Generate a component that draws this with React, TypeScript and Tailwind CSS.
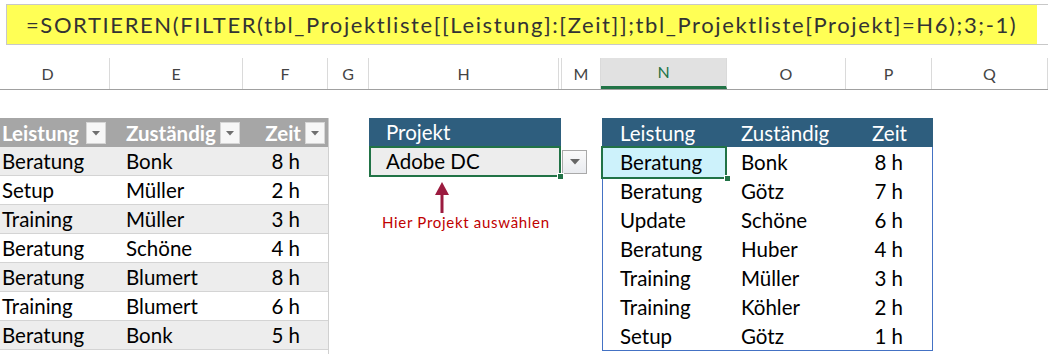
import React from 'react'

const leftRows = [
  ['Beratung', 'Bonk', '8 h'],
  ['Setup', 'Müller', '2 h'],
  ['Training', 'Müller', '3 h'],
  ['Beratung', 'Schöne', '4 h'],
  ['Beratung', 'Blumert', '8 h'],
  ['Training', 'Blumert', '6 h'],
  ['Beratung', 'Bonk', '5 h'],
]

const rightRows = [
  ['Beratung', 'Bonk', '8 h'],
  ['Beratung', 'Götz', '7 h'],
  ['Update', 'Schöne', '6 h'],
  ['Beratung', 'Huber', '4 h'],
  ['Training', 'Müller', '3 h'],
  ['Training', 'Köhler', '2 h'],
  ['Setup', 'Götz', '1 h'],
]

const columns = [
  { name: 'D', width: 'w-[124px] -ml-[14px]' },
  { name: 'E', width: 'w-[133px]' },
  { name: 'F', width: 'w-[85px]' },
  { name: 'G', width: 'w-[41px]' },
  { name: 'H', width: 'w-[190px]' },
  { name: '', width: 'w-[3px]' },
  { name: 'M', width: 'w-[39px]' },
  { name: 'N', width: 'w-[126px]', active: true },
  { name: 'O', width: 'w-[119px]' },
  { name: 'P', width: 'w-[86px]' },
  { name: 'Q', width: 'w-[116px]' },
]

function FilterButton() {
  return (
    <span className="flex items-center justify-center w-[20px] h-[22px] bg-[#f7f7f7] border border-[#d6d6d6]">
      <svg width="8" height="5" viewBox="0 0 8 5">
        <path d="M0 0 L8 0 L4 4.5 Z" fill="#6f6f6f" />
      </svg>
    </span>
  )
}

export default function App() {
  return (
    <div className="w-[1048px] h-[354px] overflow-hidden bg-white font-['Lato',sans-serif] text-black">
      {/* formula bar */}
      <div className="ml-[6px] mt-[4px] h-[41px] flex border-y border-l border-[#c8c8c8]">
        <div className="w-[1030px] h-full bg-[#ffff55] flex items-center pl-[19px] text-[22px] text-[#333] tracking-[1.6px] whitespace-nowrap overflow-hidden">
          =SORTIEREN(FILTER(tbl_Projektliste[[Leistung]:[Zeit]];tbl_Projektliste[Projekt]=H6);3;-1)
        </div>
      </div>

      {/* column headers */}
      <div className="mt-[13px] h-[32px] flex border-b border-[#a0a0a0] text-[16px] text-[#444]">
        {columns.map((c, i) => (
          <div
            key={i}
            className={
              'shrink-0 flex items-center justify-center border-r border-[#dadada] ' +
              c.width +
              (c.active ? ' bg-[#e1e1e1] border-b-[3px] border-b-[#217346] text-[#217346]' : '')
            }
          >
            {c.name}
          </div>
        ))}
      </div>

      {/* sheet body */}
      <div className="flex items-start pt-[28px] text-[20.5px]">
        {/* left table */}
        <div className="w-[329px] shrink-0 border-r border-[#d0d0d0] pb-[10px]">
          <div className="grid grid-cols-[110px_133px_85px] h-[29px] bg-[#a6a6a6] text-white font-bold">
            <div className="flex items-center justify-between pl-[2px] pr-[4px]">
              <span>Leistung</span>
              <FilterButton />
            </div>
            <div className="flex items-center justify-between pl-[16px] pr-[3px]">
              <span>Zuständig</span>
              <FilterButton />
            </div>
            <div className="flex items-center justify-end gap-[4px] pr-[3px]">
              <span>Zeit</span>
              <FilterButton />
            </div>
          </div>
          {leftRows.map((r, i) => (
            <div
              key={i}
              className={
                'grid grid-cols-[110px_133px_85px] h-[29px] border-b border-[#d4d4d4] items-center pt-[1px] ' +
                (i % 2 === 0 ? 'bg-[#ededed]' : 'bg-white')
              }
            >
              <div className="pl-[2px] leading-none">{r[0]}</div>
              <div className="pl-[16px] leading-none">{r[1]}</div>
              <div className="pr-[28px] text-right leading-none">{r[2]}</div>
            </div>
          ))}
        </div>

        {/* project selector */}
        <div className="ml-[40px] w-[218px] shrink-0">
          <div className="w-[192px] h-[29px] bg-[#2e5e7e] text-white flex items-center pl-[17px]">Projekt</div>
          <div className="flex items-start">
            <div className="relative -mt-[1px] w-[192px] h-[31px] bg-[#ededed] border-2 border-[#217346] flex items-center pl-[15px]">
              Adobe DC
              <span className="absolute -right-[5px] -bottom-[5px] w-[7px] h-[7px] bg-[#217346] border border-white" />
            </div>
            <div className="mt-[3px] ml-[1px] w-[25px] h-[24px] border border-[#a9a9a9] bg-gradient-to-b from-[#fafafa] to-[#e9ebef] flex items-center justify-center">
              <svg width="10" height="6" viewBox="0 0 10 6">
                <path d="M0 0 L10 0 L5 5.5 Z" fill="#666" />
              </svg>
            </div>
          </div>
          <div className="ml-[66px] mt-[5px]">
            <svg width="14" height="32" viewBox="0 0 14 32">
              <path d="M7 0 L14 13 L0 13 Z" fill="#9b1b3f" />
              <rect x="5.5" y="12" width="3" height="19" fill="#9b1b3f" />
            </svg>
          </div>
          <div className="ml-[13px] -mt-[1px] text-[15px] tracking-[0.7px] leading-[18px] text-[#c00000] whitespace-nowrap">
            Hier Projekt auswählen
          </div>
        </div>

        {/* result table */}
        <div className="ml-[15px] w-[331px] shrink-0">
          <div className="grid grid-cols-[125px_119px_87px] h-[29px] bg-[#2e5e7e] text-white items-center">
            <div className="pl-[18px]">Leistung</div>
            <div className="pl-[14px]">Zuständig</div>
            <div className="pl-[26px]">Zeit</div>
          </div>
          <div className="border-x border-b border-[#4472c4]">
            {rightRows.map((r, i) => (
              <div key={i} className="grid grid-cols-[124px_119px_86px] h-[29px] items-center">
                <div
                  className={
                    'relative h-full flex items-center pl-[17px] ' + (i === 0 ? 'bg-[#cdf2fb]' : '')
                  }
                >
                  {r[0]}
                  {i === 0 && (
                    <>
                      <span className="absolute -left-[2px] -top-[1px] -right-[0px] -bottom-[1px] border-2 border-[#217346]" />
                      <span className="absolute -right-[4px] -bottom-[4px] w-[7px] h-[7px] bg-[#217346] border border-white" />
                    </>
                  )}
                </div>
                <div className="pl-[14px]">{r[1]}</div>
                <div className="pr-[29px] text-right">{r[2]}</div>
              </div>
            ))}
          </div>
        </div>
      </div>
    </div>
  )
}
